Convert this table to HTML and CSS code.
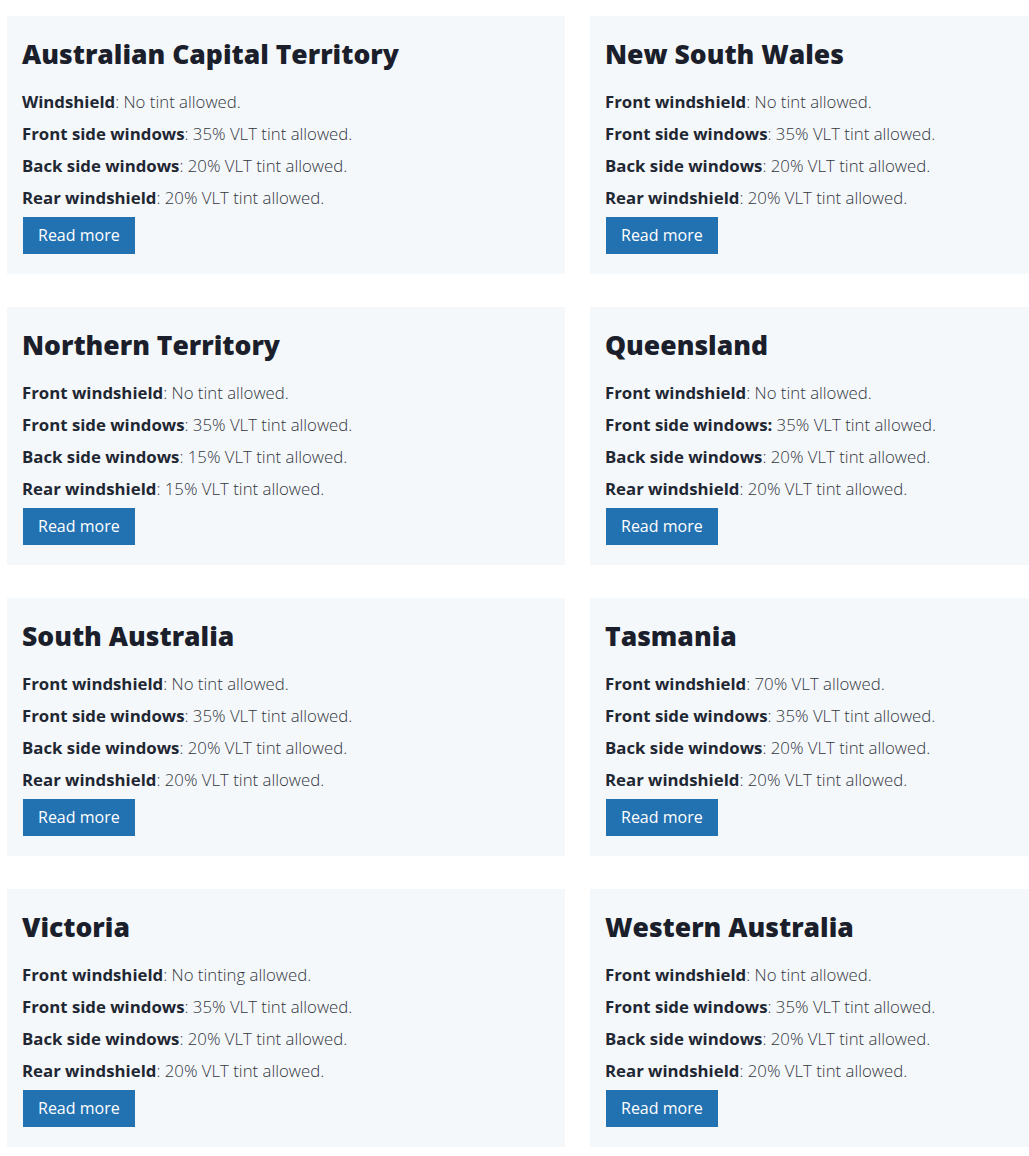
FILE: index.html
```html
<!DOCTYPE html>
<html lang="en">
<head>
<meta charset="utf-8">
<title>Window tint laws by state</title>
<link rel="stylesheet" href="styles.css">
</head>
<body>
<div class="grid">
  <section class="card">
    <h2>Australian Capital Territory</h2>
    <p><strong>Windshield</strong>: No tint allowed.</p>
    <p><strong>Front side windows</strong>: 35% VLT tint allowed.</p>
    <p><strong>Back side windows</strong>: 20% VLT tint allowed.</p>
    <p><strong>Rear windshield</strong>: 20% VLT tint allowed.</p>
    <a class="btn" href="#">Read more</a>
  </section>
  <section class="card">
    <h2>New South Wales</h2>
    <p><strong>Front windshield</strong>: No tint allowed.</p>
    <p><strong>Front side windows</strong>: 35% VLT tint allowed.</p>
    <p><strong>Back side windows</strong>: 20% VLT tint allowed.</p>
    <p><strong>Rear windshield</strong>: 20% VLT tint allowed.</p>
    <a class="btn" href="#">Read more</a>
  </section>
  <section class="card">
    <h2>Northern Territory</h2>
    <p><strong>Front windshield</strong>: No tint allowed.</p>
    <p><strong>Front side windows</strong>: 35% VLT tint allowed.</p>
    <p><strong>Back side windows</strong>: 15% VLT tint allowed.</p>
    <p><strong>Rear windshield</strong>: 15% VLT tint allowed.</p>
    <a class="btn" href="#">Read more</a>
  </section>
  <section class="card">
    <h2>Queensland</h2>
    <p><strong>Front windshield</strong>: No tint allowed.</p>
    <p><strong>Front side windows:</strong> 35% VLT tint allowed.</p>
    <p><strong>Back side windows</strong>: 20% VLT tint allowed.</p>
    <p><strong>Rear windshield</strong>: 20% VLT tint allowed.</p>
    <a class="btn" href="#">Read more</a>
  </section>
  <section class="card">
    <h2>South Australia</h2>
    <p><strong>Front windshield</strong>: No tint allowed.</p>
    <p><strong>Front side windows</strong>: 35% VLT tint allowed.</p>
    <p><strong>Back side windows</strong>: 20% VLT tint allowed.</p>
    <p><strong>Rear windshield</strong>: 20% VLT tint allowed.</p>
    <a class="btn" href="#">Read more</a>
  </section>
  <section class="card">
    <h2>Tasmania</h2>
    <p><strong>Front windshield</strong>: 70% VLT allowed.</p>
    <p><strong>Front side windows</strong>: 35% VLT tint allowed.</p>
    <p><strong>Back side windows</strong>: 20% VLT tint allowed.</p>
    <p><strong>Rear windshield</strong>: 20% VLT tint allowed.</p>
    <a class="btn" href="#">Read more</a>
  </section>
  <section class="card">
    <h2>Victoria</h2>
    <p><strong>Front windshield</strong>: No tinting allowed.</p>
    <p><strong>Front side windows</strong>: 35% VLT tint allowed.</p>
    <p><strong>Back side windows</strong>: 20% VLT tint allowed.</p>
    <p><strong>Rear windshield</strong>: 20% VLT tint allowed.</p>
    <a class="btn" href="#">Read more</a>
  </section>
  <section class="card">
    <h2>Western Australia</h2>
    <p><strong>Front windshield</strong>: No tint allowed.</p>
    <p><strong>Front side windows</strong>: 35% VLT tint allowed.</p>
    <p><strong>Back side windows</strong>: 20% VLT tint allowed.</p>
    <p><strong>Rear windshield</strong>: 20% VLT tint allowed.</p>
    <a class="btn" href="#">Read more</a>
  </section>
</div>
</body>
</html>
```
FILE: styles.css
```css
html, body {
  margin: 0;
  padding: 0;
  background: #ffffff;
  overflow: hidden;
}
body {
  font-family: "Open Sans", Lato, "Liberation Sans", sans-serif;
  color: #32373d;
}
.grid {
  display: grid;
  grid-template-columns: 558px 1fr;
  column-gap: 25px;
  row-gap: 33px;
  padding: 16px 0 0 7px;
}
.card {
  background: #f5f8fb;
  padding: 20px 15px 20px 15px;
  height: 258px;
  box-sizing: border-box;
}
.card h2 {
  margin: 0 0 18px;
  font-size: 26.5px;
  line-height: 36px;
  font-weight: 800;
  color: #1b1f2b;
}
.card p {
  margin: 0 0 8px;
  font-size: 16.8px;
  line-height: 24px;
  font-weight: 300;
}
.card strong {
  font-weight: 700;
  color: #1f2733;
}
.btn {
  display: inline-block;
  margin: -1px 0 0 1px;
  height: 37px;
  line-height: 37px;
  padding: 0 15px;
  background: #2271b1;
  color: #ffffff;
  font-size: 16px;
  text-decoration: none;
}
```
